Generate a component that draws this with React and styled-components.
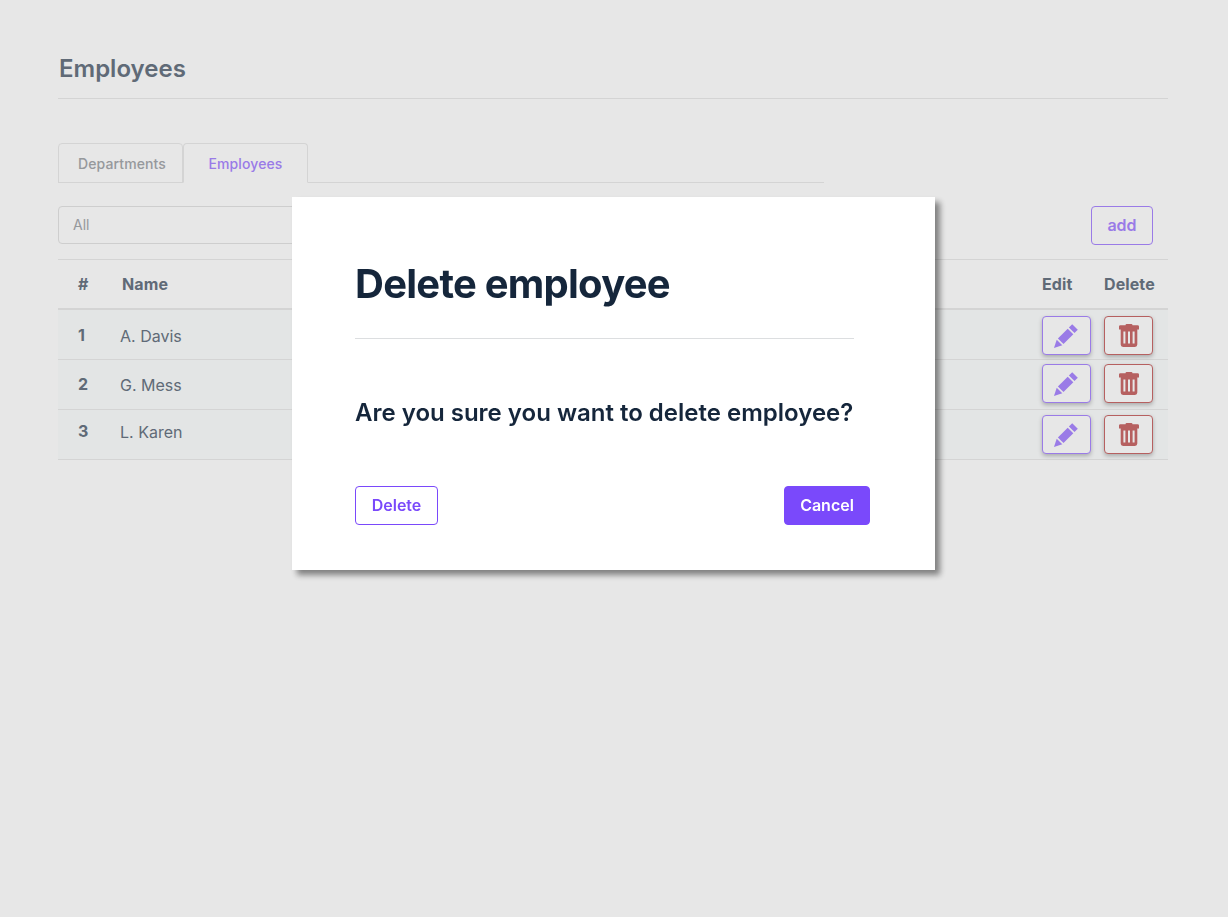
import React from 'react';
import styled, { createGlobalStyle } from 'styled-components';

const GlobalStyle = createGlobalStyle`
  html, body {
    margin: 0;
    padding: 0;
    background: #fff;
    font-family: Inter, "Liberation Sans", sans-serif;
  }
`;

const Page = styled.div`
  box-sizing: border-box;
  width: 100%;
  height: 917px;
  padding: 52px 60px 0 58px;
`;

const Title = styled.h1`
  margin: 0;
  padding-left: 1px;
  height: 46px;
  border-bottom: 1px solid #ebebeb;
  font-size: 24px;
  line-height: 33px;
  font-weight: 600;
  color: #6a7684;
`;

const Tabs = styled.div`
  display: flex;
  align-items: flex-end;
  width: 766px;
  height: 41px;
  margin-top: 42px;
  border-bottom: 1px solid #ebebeb;
`;

const Tab = styled.div`
  box-sizing: border-box;
  height: 40px;
  width: 125px;
  margin-bottom: -1px;
  padding-left: ${props => (props.$active ? '0' : '3px')};
  display: flex;
  align-items: center;
  justify-content: center;
  border: 1px solid #ebebeb;
  border-bottom: ${props => (props.$active ? '1px solid #fff' : '1px solid #ebebeb')};
  border-radius: 4px 4px 0 0;
  font-size: 14px;
  font-weight: 500;
  letter-spacing: 0.1px;
  color: ${props => (props.$active ? '#aa88ff' : '#a6a9ad')};
`;

const Filters = styled.div`
  display: flex;
  justify-content: space-between;
  align-items: flex-start;
  height: 39px;
  margin-top: 23px;
  padding-right: 15px;
`;

const Select = styled.div`
  box-sizing: border-box;
  width: 300px;
  height: 38px;
  padding: 0 0 2px 14px;
  display: flex;
  align-items: center;
  border: 1px solid #e4e4e4;
  border-radius: 4px;
  font-size: 14px;
  color: #a6a9ad;
`;

const AddButton = styled.button`
  box-sizing: border-box;
  width: 62px;
  height: 39px;
  padding: 0 0 1px;
  background: transparent;
  border: 1px solid #aa88ff;
  border-radius: 4px;
  font-family: inherit;
  font-size: 16px;
  font-weight: 600;
  color: #aa88ff;
`;

const Table = styled.div`
  margin-top: 14px;
  border-top: 1px solid #ebebeb;
`;

const Row = styled.div`
  box-sizing: border-box;
  display: grid;
  grid-template-columns: 62px 1fr 62px 64px;
  align-items: center;
  height: 50px;
  background: ${props => (props.$head ? 'transparent' : '#fbfdfd')};
  border-bottom: ${props => (props.$head ? '2px solid #ebebeb' : '1px solid #ebebeb')};
  color: #6a7684;
`;

const HeadCell = styled.div`
  font-size: 16px;
  font-weight: 700;
  letter-spacing: 0.1px;
  padding-left: ${props => props.$left || '0'};
`;

const Num = styled.div`
  font-size: 16px;
  font-weight: 700;
  padding-left: 20px;
  transform: translateY(${props => props.$shift});
`;

const Name = styled.div`
  font-size: 16px;
  font-weight: 400;
  transform: translateY(${props => props.$shift});
`;

const IconButton = styled.button`
  box-sizing: border-box;
  width: 49px;
  height: 39px;
  padding: 0 ${props => props.$inset || '0'} 0 0;
  display: flex;
  align-items: center;
  justify-content: center;
  background: #fff;
  border: 1px solid ${props => props.$color};
  border-radius: 4px;
  box-shadow: 0 2px 4px rgba(0, 0, 0, 0.25);
  color: ${props => props.$color};
  transform: translateY(${props => props.$shift});
`;

const Overlay = styled.div`
  position: fixed;
  inset: 0;
  background: rgba(0, 0, 0, 0.095);
`;

const Modal = styled.div`
  position: fixed;
  box-sizing: border-box;
  left: 292px;
  top: 197px;
  width: 643px;
  height: 373px;
  padding: 63px 65px 0 63px;
  background: #fff;
  box-shadow: 5px 5px 6px rgba(0, 0, 0, 0.45);
`;

const ModalTitle = styled.h2`
  margin: 0;
  height: 78px;
  border-bottom: 1px solid #dcdee0;
  margin-right: 16px;
  font-size: 40px;
  line-height: 48px;
  font-weight: 700;
  letter-spacing: -0.75px;
  color: #15263b;
`;

const ModalText = styled.p`
  margin: 59px 0 0;
  font-size: 24px;
  line-height: 29px;
  font-weight: 600;
  color: #15263b;
`;

const ModalActions = styled.div`
  display: flex;
  justify-content: space-between;
  margin-top: 59px;
`;

const ModalButton = styled.button`
  box-sizing: border-box;
  height: 39px;
  width: ${props => props.$width};
  padding: 0 0 2px;
  background: ${props => (props.$filled ? '#7a49fb' : '#fff')};
  border: 1px solid #7a49fb;
  border-radius: 4px;
  font-family: inherit;
  font-size: 16px;
  font-weight: 600;
  color: ${props => (props.$filled ? '#fff' : '#7a49fb')};
`;

const PencilIcon = () => (
  <svg width="24" height="24" viewBox="0 0 24 24" fill="currentColor">
    <path d="M0 24 L2.7 15.7 L8.3 21.3 Z" />
    <path d="M3.9 14.5 L13.7 4.7 L19.3 10.3 L9.5 20.1 Z" />
    <path d="M14.9 3.5 L18.2 0.2 L23.8 5.8 L20.5 9.1 Z" />
  </svg>
);

const TrashIcon = () => (
  <svg width="20" height="23" viewBox="0 0 20 23" fill="currentColor">
    <path d="M6.5 1.2 Q6.5 0 7.7 0 H12.3 Q13.5 0 13.5 1.2 H18.6 Q20 1.2 20 2.6 V5.4 H0 V2.6 Q0 1.2 1.4 1.2 Z" />
    <path
      fillRule="evenodd"
      d="M1.7 5 H18.3 V20.6 Q18.3 23 15.9 23 H4.1 Q1.7 23 1.7 20.6 Z M4.4 7.4 V19.6 H6.4 V7.4 Z M9 7.4 V19.6 H11 V7.4 Z M13.6 7.4 V19.6 H15.6 V7.4 Z"
    />
  </svg>
);

const employees = [
  { id: 1, name: 'A. Davis', numShift: '0', nameShift: '1px', btnShift: '1px' },
  { id: 2, name: 'G. Mess', numShift: '-1px', nameShift: '0', btnShift: '-1px' },
  { id: 3, name: 'L. Karen', numShift: '-4px', nameShift: '-3px', btnShift: '0' },
];

export default function App() {
  return (
    <>
      <GlobalStyle />
      <Page>
        <Title>Employees</Title>
        <Tabs>
          <Tab>Departments</Tab>
          <Tab $active>Employees</Tab>
        </Tabs>
        <Filters>
          <Select>All</Select>
          <AddButton>add</AddButton>
        </Filters>
        <Table>
          <Row $head>
            <HeadCell $left="20px">#</HeadCell>
            <HeadCell $left="2px">Name</HeadCell>
            <HeadCell>Edit</HeadCell>
            <HeadCell>Delete</HeadCell>
          </Row>
          {employees.map(e => (
            <Row key={e.id}>
              <Num $shift={e.numShift}>{e.id}</Num>
              <Name $shift={e.nameShift}>{e.name}</Name>
              <IconButton $color="#aa88ff" $shift={e.btnShift} $inset="2px"><PencilIcon /></IconButton>
              <IconButton $color="#c96a6a" $shift={e.btnShift}><TrashIcon /></IconButton>
            </Row>
          ))}
        </Table>
      </Page>
      <Overlay />
      <Modal>
        <ModalTitle>Delete employee</ModalTitle>
        <ModalText>Are you sure you want to delete employee?</ModalText>
        <ModalActions>
          <ModalButton $width="83px">Delete</ModalButton>
          <ModalButton $width="86px" $filled>Cancel</ModalButton>
        </ModalActions>
      </Modal>
    </>
  );
}
